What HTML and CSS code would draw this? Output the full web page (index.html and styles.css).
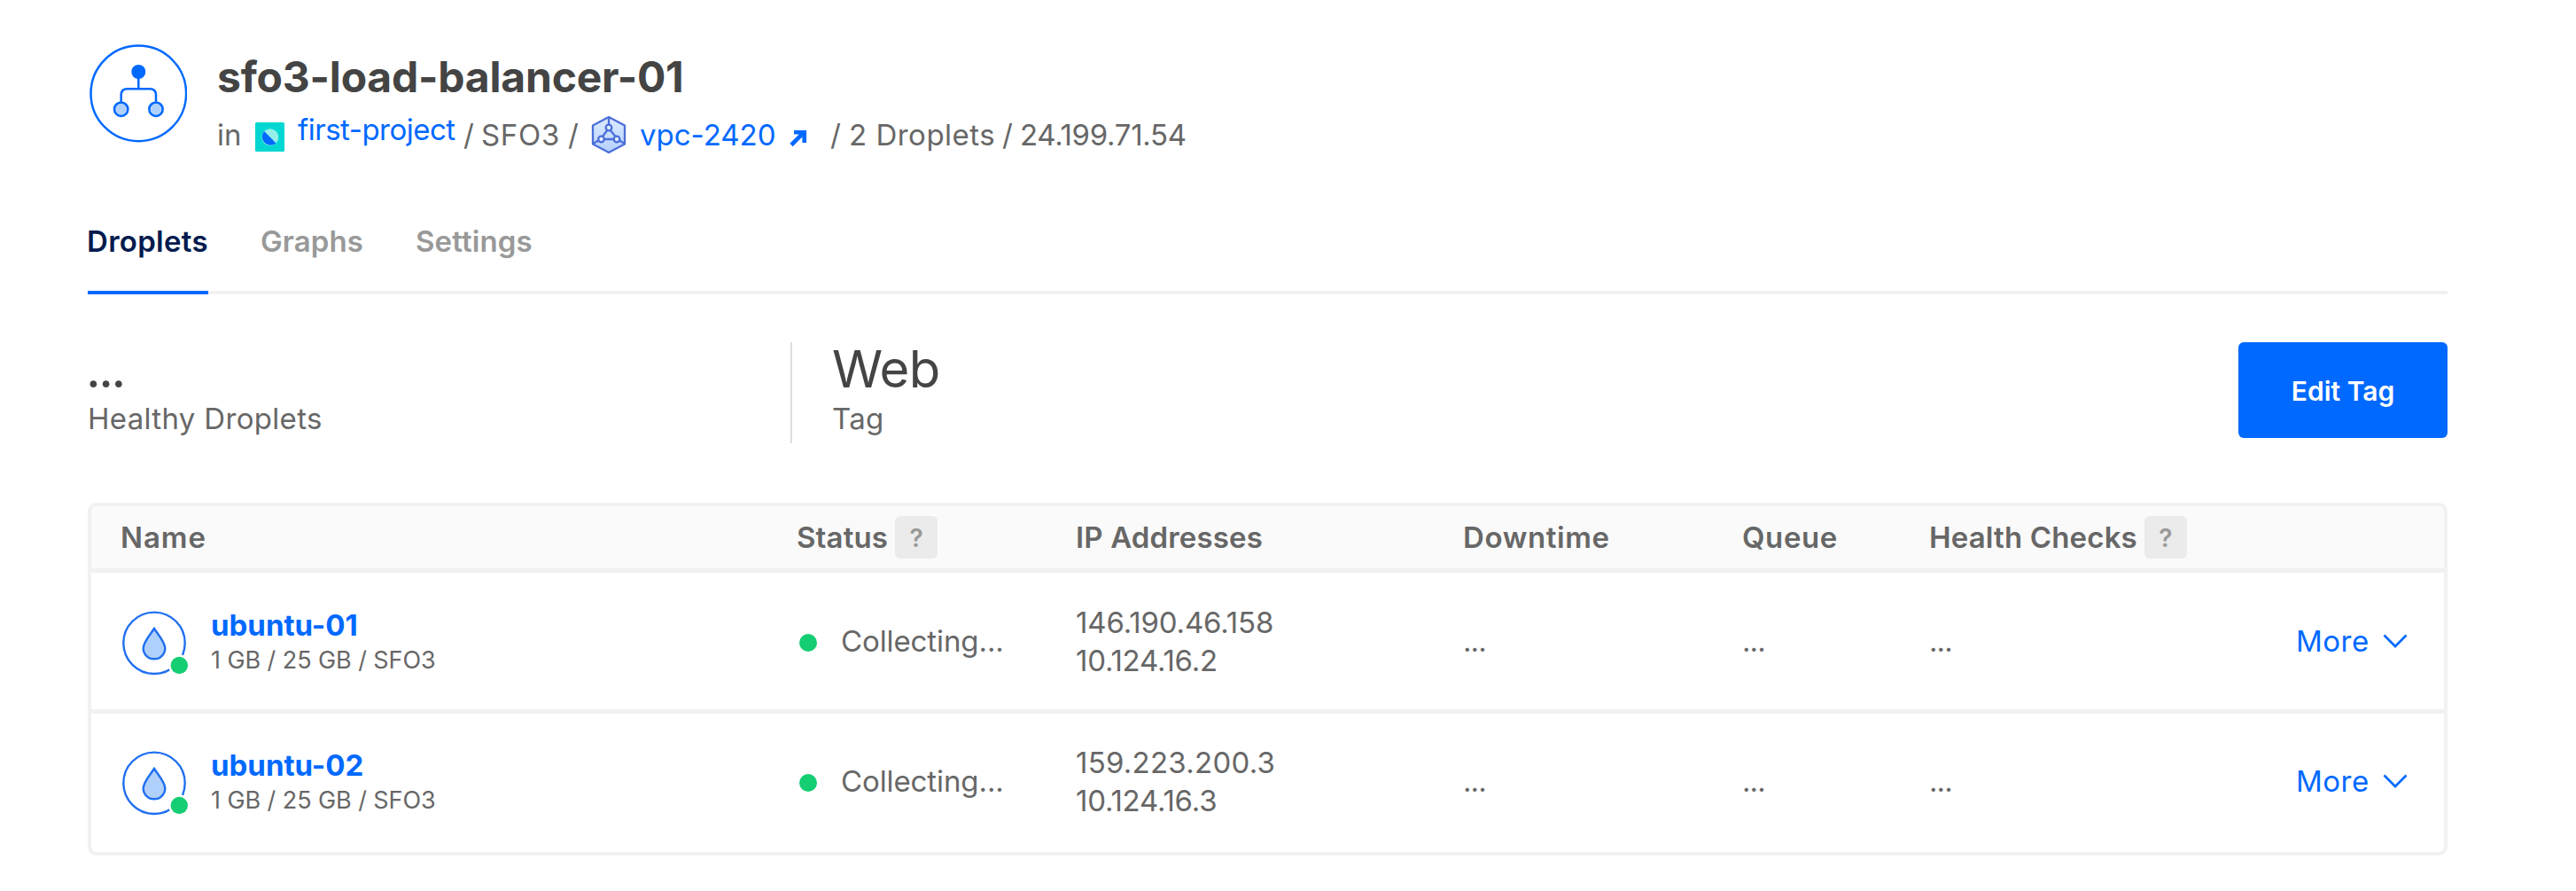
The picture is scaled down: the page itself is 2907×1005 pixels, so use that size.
FILE: index.html
```html
<!DOCTYPE html>
<html lang="en">
<head>
<meta charset="utf-8">
<title>sfo3-load-balancer-01</title>
<link rel="stylesheet" href="styles.css">
</head>
<body>
<main class="page">
  <header class="header">
    <svg class="lb-icon" width="110" height="112" viewBox="6 5 110 112" fill="none" stroke="#0069ff" stroke-width="2.5">
      <circle cx="61.3" cy="60.4" r="53.8"/>
      <path d="M61.3 42V55.3M41.7 70V62.3Q41.7 55.3 48.7 55.3H74Q81 55.3 81 62.3V70"/>
      <circle cx="61.3" cy="36" r="8" fill="#0069ff" stroke="none"/>
      <circle cx="41.7" cy="78.2" r="7.7" fill="#b0d0fc"/>
      <circle cx="81" cy="78.2" r="7.7" fill="#b0d0fc"/>
    </svg>
    <div class="heading">
      <h1>sfo3-load-balancer-01</h1>
      <div class="meta">
        <span>in</span>
        <svg class="project-icon" width="33" height="33" viewBox="0 0 33 33">
          <rect width="33" height="33" rx="1.5" fill="#00d7d2"/>
          <circle cx="16.8" cy="16.7" r="9.5" fill="#94f0e8"/>
          <path d="M10.1 10A9.5 9.5 0 0 0 23.5 23.4Z" fill="#0069ff"/>
        </svg>
        <a class="link project" href="#">first-project</a>
        <span>/</span>
        <span class="region">SFO3</span>
        <span>/</span>
        <svg class="vpc-icon" width="40" height="44" viewBox="7.5 4 40 44" fill="none" stroke="#4c6fd8" stroke-width="2.3">
          <defs><linearGradient id="hex" x1="0" y1="0" x2="0" y2="1"><stop offset="0" stop-color="#dcebff"/><stop offset="1" stop-color="#b5d0ff"/></linearGradient></defs>
          <path d="M27.5 6L45.5 15.5V36.5L27.5 46L9.5 36.5V15.5Z" fill="url(#hex)" stroke-linejoin="round"/>
          <path d="M27.5 6V15M26 20.5L20.5 28M29 20.5L35 28M22 31H33M16 32.5L9.5 36M39.5 32.5L45.5 36"/>
          <g fill="#e4eeff"><circle cx="27.5" cy="18" r="3.3"/><circle cx="19" cy="31" r="3.3"/><circle cx="36.5" cy="31" r="3.3"/></g>
        </svg>
        <a class="link" href="#">vpc-2420</a>
        <svg class="external" width="20" height="20" viewBox="0 0 20 20" fill="none" stroke="#0069ff" stroke-width="4.6"><path d="M2 17.5L15 4.5M5 3.3H16.7V15"/></svg>
        <span>/</span>
        <span class="count">2 Droplets</span>
        <span>/</span>
        <span class="address">24.199.71.54</span>
      </div>
    </div>
  </header>

  <nav class="tabs">
    <a class="tab active" href="#">Droplets</a>
    <a class="tab" href="#">Graphs</a>
    <a class="tab" href="#">Settings</a>
  </nav>

  <section class="summary">
    <div class="stat">
      <div class="value pending">...</div>
      <div class="label">Healthy Droplets</div>
    </div>
    <div class="stat divided">
      <div class="value">Web</div>
      <div class="label">Tag</div>
    </div>
    <button class="button">Edit Tag</button>
  </section>

  <section class="table">
    <div class="row head">
      <div class="wide">Name</div>
      <div>Status<span class="help">?</span></div>
      <div>IP Addresses</div>
      <div class="downtime">Downtime</div>
      <div class="downtime">Queue</div>
      <div>Health Checks<span class="help">?</span></div>
      <div></div>
    </div>
    <div class="row droplet">
      <div class="name">
        <svg class="droplet-icon" width="76" height="74" viewBox="0 0 76 74">
          <circle cx="37" cy="36.3" r="34.7" fill="#fff" stroke="#1f6ff0" stroke-width="2.4"/>
          <path d="M37 20C40.5 25.5 49.3 35 49.3 42.3A12.3 12 0 0 1 24.7 42.3C24.7 35 33.5 25.5 37 20Z" fill="#b0d0fc" stroke="#1f6ff0" stroke-width="2.4"/>
          <circle cx="65.3" cy="61.5" r="12.2" fill="#fff"/><circle cx="65.3" cy="61.5" r="9.7" fill="#15cd72"/>
        </svg>
        <div class="title"><a class="link" href="#">ubuntu-01</a><small>1 GB / 25 GB / SFO3</small></div>
      </div>
      <div class="status"><i class="dot"></i>Collecting...</div>
      <div class="ips"><span>146.190.46.158</span><span class="private">10.124.16.2</span></div>
      <div class="cell">...</div>
      <div class="cell">...</div>
      <div class="cell">...</div>
      <a class="link more" href="#">More<svg width="28" height="18" viewBox="0 0 28 18" fill="none" stroke="#0069ff" stroke-width="2.7"><path d="M1.5 2.5L14 15L26.5 2.5"/></svg></a>
    </div>
    <div class="row droplet last">
      <div class="name">
        <svg class="droplet-icon" width="76" height="74" viewBox="0 0 76 74">
          <circle cx="37" cy="36.3" r="34.7" fill="#fff" stroke="#1f6ff0" stroke-width="2.4"/>
          <path d="M37 20C40.5 25.5 49.3 35 49.3 42.3A12.3 12 0 0 1 24.7 42.3C24.7 35 33.5 25.5 37 20Z" fill="#b0d0fc" stroke="#1f6ff0" stroke-width="2.4"/>
          <circle cx="65.3" cy="61.5" r="12.2" fill="#fff"/><circle cx="65.3" cy="61.5" r="9.7" fill="#15cd72"/>
        </svg>
        <div class="title"><a class="link" href="#">ubuntu-02</a><small>1 GB / 25 GB / SFO3</small></div>
      </div>
      <div class="status"><i class="dot"></i>Collecting...</div>
      <div class="ips"><span class="loose">159.223.200.3</span><span class="private">10.124.16.3</span></div>
      <div class="cell">...</div>
      <div class="cell">...</div>
      <div class="cell">...</div>
      <a class="link more" href="#">More<svg width="28" height="18" viewBox="0 0 28 18" fill="none" stroke="#0069ff" stroke-width="2.7"><path d="M1.5 2.5L14 15L26.5 2.5"/></svg></a>
    </div>
  </section>
</main>
</body>
</html>
```
FILE: styles.css
```css
* { box-sizing: border-box; }

body {
  margin: 0;
  background: #fff;
  color: #676767;
  font: 400 33px/40px Inter, "Liberation Sans", sans-serif;
  white-space: nowrap;
}

svg { display: block; flex: none; }

.page { width: 2762px; padding: 50px 0 0 99px; }
.link { color: #0069ff; text-decoration: none; }

/* Header */
.header { display: flex; height: 122px; padding-left: 2px; }
.heading { padding: 7px 0 0 34px; }

h1 {
  margin: 0 0 15px;
  color: #444;
  font-size: 48px;
  font-weight: 700;
  line-height: 60px;
  letter-spacing: -0.2px;
}

.meta {
  display: grid;
  grid-template-columns: 43px 48px 187px 20px 98px 26px 55px 169px 46px 21px 173px 20px 190px;
  align-items: start;
}

.project-icon { margin-top: 6px; }
.project { margin-top: -6px; letter-spacing: -0.5px; }
.region { letter-spacing: 0.7px; }
.vpc-icon { margin-top: -2px; }
.external { margin-top: 14px; }
.count { letter-spacing: 0.5px; }
.address { letter-spacing: -0.32px; }

/* Tabs */
.tabs {
  display: flex;
  gap: 59px;
  height: 80px;
  margin-top: 80px;
  border-bottom: 4px solid #f1f1f1;
}

.tab {
  height: 80px;
  color: #999;
  font-weight: 600;
  letter-spacing: 0.1px;
  text-decoration: none;
}

.tab.active {
  width: 136px;
  border-bottom: 4px solid #0069ff;
  color: #031b4e;
  letter-spacing: 0.3px;
  text-indent: -1px;
}

/* Summary */
.summary { display: flex; height: 114px; margin-top: 54px; }
.stat { flex: 0 0 793px; }
.divided { flex: 1; padding-left: 45px; border-left: 2px solid #ddd; }
.value { color: #444; font-size: 58px; line-height: 60px; letter-spacing: -0.6px; }
.pending { letter-spacing: -2.5px; text-indent: -2px; }
.label { margin-top: 6px; letter-spacing: 0.32px; }

.button {
  width: 236px;
  height: 108px;
  padding: 2px 0 0;
  border: 0;
  border-radius: 6px;
  background: #0069ff;
  color: #fff;
  font: 600 30px/40px Inter, "Liberation Sans", sans-serif;
}

/* Droplet table */
.table {
  margin-top: 67px;
  border: 4px solid #f1f1f1;
  border-radius: 10px;
}

.row {
  display: grid;
  grid-template-columns: 763px 315px 437px 315px 211px 414px 1fr;
  align-items: start;
  padding-left: 33px;
  border-bottom: 5px solid #f1f1f1;
}

.head {
  height: 75px;
  align-items: center;
  border-radius: 6px 6px 0 0;
  background: #fafafa;
  font-weight: 600;
  letter-spacing: 0.15px;
}

.head > div { display: flex; align-items: center; }
.head .wide { letter-spacing: 0.9px; }
.head .downtime { letter-spacing: 0.6px; }

.help {
  width: 48px;
  height: 48px;
  margin-left: 8px;
  border-radius: 6px;
  background: #ebebeb;
  color: #999;
  font-size: 28px;
  line-height: 50px;
  text-align: center;
}

.droplet { height: 159px; padding-top: 43px; }
.droplet.last { height: 156px; padding-top: 42px; border-bottom: 0; }

.name { display: flex; padding-left: 1px; }
.title { display: flex; flex-direction: column; margin: -2px 0 0 25px; }
.title .link { font-weight: 700; line-height: 36px; }
.title small { margin-top: 5px; font-size: 27px; line-height: 34px; letter-spacing: -0.08px; }

.status { display: flex; margin-top: 14px; letter-spacing: -0.1px; }
.dot { width: 20px; height: 20px; margin: 12px 27px 0 3px; border-radius: 50%; background: #15cd72; }

.ips { display: flex; flex-direction: column; margin-top: -8px; line-height: 43px; letter-spacing: -0.15px; }
.private { letter-spacing: -0.22px; }
.loose { letter-spacing: 0.25px; }
.cell { margin-top: 14px; letter-spacing: -0.9px; }
.more { display: flex; align-items: center; gap: 15px; margin-top: 14px; letter-spacing: 0.5px; }
```
